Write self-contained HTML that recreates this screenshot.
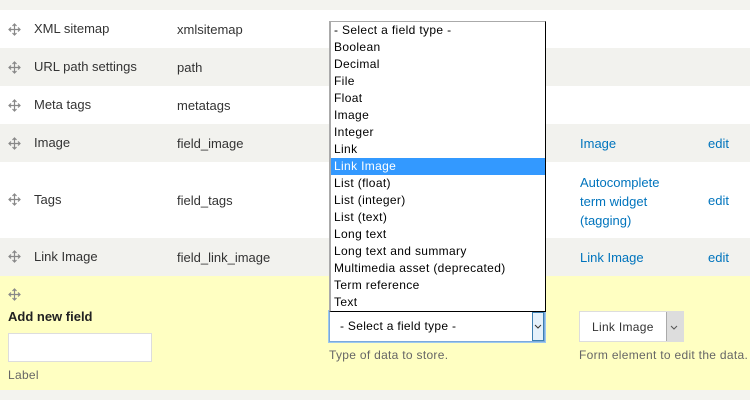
<!DOCTYPE html>
<html><head><style>
*{margin:0;padding:0;box-sizing:border-box}
body{width:750px;height:400px;background:#f3f3ef;font-family:"Liberation Sans",sans-serif;font-size:13px;color:#333;position:relative;overflow:hidden}
.row{position:absolute;left:0;width:750px}
.t{position:absolute;white-space:nowrap}
.a{color:#0074bd}
.h{position:absolute;left:8px;width:13px;height:13px}
.dd{position:absolute;left:329px;top:21px;width:217px;height:291px;background:#fff;border:1px solid #000;border-top-color:#aaa;border-left:2px solid #aaa;font-size:12px;letter-spacing:.35px;color:#000}
.dd div{height:17px;line-height:17px;padding-left:3px;white-space:nowrap}
.dd .s{background:#3399ff;color:#fff}
.hl{font-size:12px;letter-spacing:.3px;color:#666}
</style></head><body>
<svg width="0" height="0" style="position:absolute"><symbol id="hd" viewBox="0 0 13 13"><path d="M6.5 1v11M1 6.5h11M4.5 3l2-2 2 2M4.5 10l2 2 2-2M3 4.5l-2 2 2 2M10 4.5l2 2-2 2" stroke="#888" fill="none" stroke-width="1.2"/></symbol></svg>
<div class="row" style="top:10px;height:38px;background:#fff"></div>
<div class="row" style="top:48px;height:38px;background:#f2f2ee"></div>
<div class="row" style="top:86px;height:38px;background:#fff"></div>
<div class="row" style="top:124px;height:38px;background:#f2f2ee"></div>
<div class="row" style="top:162px;height:76px;background:#fff"></div>
<div class="row" style="top:238px;height:38px;background:#f2f2ee"></div>
<div class="row" style="top:276px;height:114px;background:#ffffc2"></div>

<svg class="h" style="top:23px"><use href="#hd"/></svg>
<svg class="h" style="top:61px"><use href="#hd"/></svg>
<svg class="h" style="top:99px"><use href="#hd"/></svg>
<svg class="h" style="top:137px"><use href="#hd"/></svg>
<svg class="h" style="top:193px"><use href="#hd"/></svg>
<svg class="h" style="top:250px"><use href="#hd"/></svg>
<svg class="h" style="top:288px"><use href="#hd"/></svg>

<div class="t" style="left:34px;top:21px">XML sitemap</div>
<div class="t" style="left:177px;top:22px">xmlsitemap</div>
<div class="t" style="left:34px;top:59px">URL path settings</div>
<div class="t" style="left:177px;top:60px">path</div>
<div class="t" style="left:34px;top:97px">Meta tags</div>
<div class="t" style="left:177px;top:98px">metatags</div>
<div class="t" style="left:34px;top:135px">Image</div>
<div class="t" style="left:177px;top:136px">field_image</div>
<div class="t" style="left:34px;top:192px">Tags</div>
<div class="t" style="left:177px;top:193px">field_tags</div>
<div class="t" style="left:34px;top:249px">Link Image</div>
<div class="t" style="left:177px;top:250px">field_link_image</div>

<div class="t a" style="left:580px;top:136px">Image</div>
<div class="t a" style="left:708px;top:136px">edit</div>
<div class="t a" style="left:580px;top:173px;line-height:19px">Autocomplete<br>term widget<br>(tagging)</div>
<div class="t a" style="left:708px;top:193px">edit</div>
<div class="t a" style="left:580px;top:250px">Link Image</div>
<div class="t a" style="left:708px;top:250px">edit</div>

<div class="t" style="left:8px;top:309px;font-weight:bold;color:#222">Add new field</div>
<div style="position:absolute;left:8px;top:333px;width:144px;height:29px;background:#fff;border:1px solid #ddd"></div>
<div class="t hl" style="left:8px;top:368px">Label</div>

<div style="position:absolute;left:328px;top:310px;width:218px;height:33px;border:1px solid #9cc8ef;background:#fff">
<div style="position:absolute;left:0;top:0;width:216px;height:31px;border:1px solid #7ba9dc"></div>
<div class="t" style="left:11px;top:8px;font-size:12px;letter-spacing:.3px;color:#000">- Select a field type -</div>
<div style="position:absolute;right:1px;top:1px;width:12px;height:29px;background:#e5f1fb;border:1px solid #3c7fb1"></div>
<svg style="position:absolute;right:3px;top:13px" width="8" height="5"><path d="M1 1l3 3 3-3" stroke="#333" fill="none"/></svg>
</div>
<div class="t hl" style="left:329px;top:348px">Type of data to store.</div>

<div style="position:absolute;left:579px;top:311px;width:105px;height:31px;border:1px solid #ddd;background:#fff">
<div class="t" style="left:12px;top:8px;font-size:12px;letter-spacing:.3px;color:#333">Link Image</div>
<div style="position:absolute;right:0;top:0;width:17px;height:29px;background:#ddd;border-left:1px solid #aaa"></div>
<svg style="position:absolute;right:5px;top:13px" width="8" height="5"><path d="M1 1l3 3 3-3" stroke="#555" fill="none"/></svg>
</div>
<div class="t hl" style="left:579px;top:348px">Form element to edit the data.</div>

<div class="dd">
<div>- Select a field type -</div><div>Boolean</div><div>Decimal</div><div>File</div><div>Float</div><div>Image</div><div>Integer</div><div>Link</div><div class="s">Link Image</div><div>List (float)</div><div>List (integer)</div><div>List (text)</div><div>Long text</div><div>Long text and summary</div><div>Multimedia asset (deprecated)</div><div>Term reference</div><div>Text</div>
</div>
</body></html>
